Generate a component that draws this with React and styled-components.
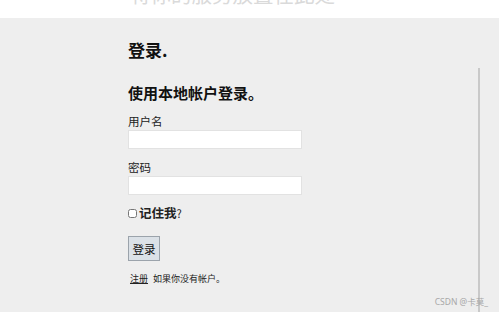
import React from 'react';
import styled, { createGlobalStyle } from 'styled-components';

const GlobalStyle = createGlobalStyle`
  html, body {
    margin: 0;
    padding: 0;
    background: #eeeeee;
    font-family: "Microsoft YaHei", "Noto Sans CJK SC", "Noto Sans", sans-serif;
  }
`;

const Page = styled.div`
  position: relative;
  min-height: 100vh;
  display: flex;
  flex-direction: column;
`;

const Banner = styled.header`
  height: 18px;
  overflow: hidden;
  background: #ffffff;
  padding-left: 130px;
`;

const BannerText = styled.div`
  margin-top: -16px;
  font-size: 20.5px;
  line-height: 1;
  color: #dadada;
  white-space: nowrap;
`;

const Main = styled.main`
  flex: 1;
  display: flex;
`;

const Content = styled.section`
  flex: 1;
  padding: 23px 0 0 128px;
`;

const Side = styled.aside`
  width: 2px;
  margin: 50px 19px 0 0;
  background: #c9c9c9;
`;

const Title = styled.h2`
  margin: 0;
  font-size: 17px;
  line-height: 17px;
  font-weight: 700;
  color: #111;
`;

const SubTitle = styled.h4`
  margin: 27px 0 0;
  font-size: 15px;
  line-height: 15px;
  font-weight: 700;
  color: #111;
`;

const Label = styled.label`
  display: block;
  margin-top: ${props => props.$top}px;
  font-size: 11.5px;
  line-height: 12px;
  color: #222;
`;

const Field = styled.input`
  display: block;
  box-sizing: border-box;
  width: 174px;
  height: 19px;
  margin: 3px 0 0;
  padding: 0 3px;
  border: 1px solid #e2e2e2;
  background: #fff;
  outline: none;
`;

const CheckRow = styled.div`
  display: flex;
  align-items: center;
  gap: 2px;
  margin-top: 11px;
  font-size: 12.5px;
  line-height: 13px;
  font-weight: 700;
  color: #222;
`;

const Check = styled.input`
  width: 9px;
  height: 9px;
  margin: 0;
`;

const Question = styled.span`
  font-weight: 400;
  font-size: 11px;
`;

const Submit = styled.button`
  display: block;
  box-sizing: border-box;
  width: 32px;
  height: 25px;
  margin-top: 16px;
  padding: 0;
  font-family: inherit;
  font-size: 11.5px;
  color: #111;
  background: #dbe1e7;
  border: 1px solid #9ba3ab;
`;

const Footer = styled.p`
  margin: 13px 0 0 2px;
  font-size: 9px;
  line-height: 10px;
  color: #222;
`;

const Link = styled.a`
  color: #222;
  text-decoration: underline;
  margin-right: 5px;
`;

const Watermark = styled.div`
  position: absolute;
  right: 11px;
  bottom: 5px;
  font-family: "Noto Sans", "Noto Sans CJK SC", sans-serif;
  font-size: 8.5px;
  color: #a8a8a8;
`;

export default function App() {
  return (
    <Page>
      <GlobalStyle />
      <Banner>
        <BannerText>将你的服务放置在此处</BannerText>
      </Banner>
      <Main>
        <Content>
          <Title>登录.</Title>
          <SubTitle>使用本地帐户登录。</SubTitle>
          <Label $top={15} htmlFor="user">用户名</Label>
          <Field id="user" type="text" />
          <Label $top={12} htmlFor="pass">密码</Label>
          <Field id="pass" type="password" />
          <CheckRow>
            <Check type="checkbox" id="remember" />
            <label htmlFor="remember">记住我<Question>?</Question></label>
          </CheckRow>
          <Submit type="button">登录</Submit>
          <Footer>
            <Link href="#">注册</Link>
            如果你没有帐户。
          </Footer>
        </Content>
        <Side />
      </Main>
      <Watermark>CSDN @卡莫_</Watermark>
    </Page>
  );
}
